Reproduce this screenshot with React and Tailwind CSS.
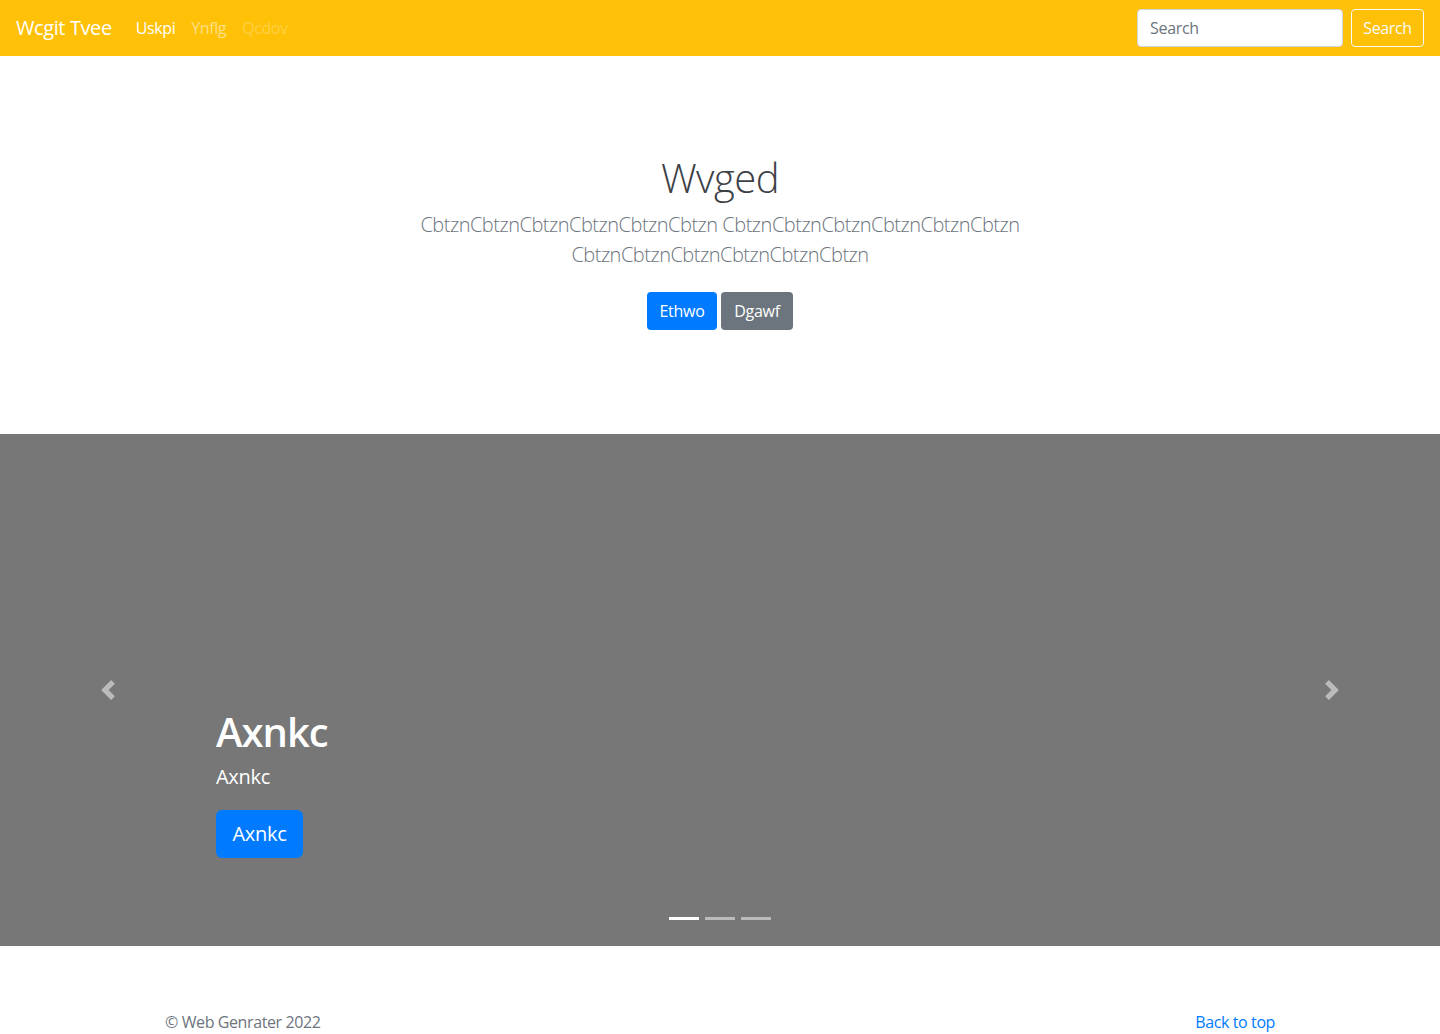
import React from "react";

const font = { fontFamily: '"Open Sans", "Noto Sans", Arial, sans-serif' };

function Chevron({ dir }) {
  return (
    <svg width="20" height="20" viewBox="0 0 8 8" fill="#fff" className="opacity-50">
      {dir === "left" ? (
        <path d="M5.25 0l-4 4 4 4 1.5-1.5L4.25 4l2.5-2.5L5.25 0z" />
      ) : (
        <path d="M2.75 0l-1.5 1.5L3.75 4l-2.5 2.5L2.75 8l4-4-4-4z" />
      )}
    </svg>
  );
}

export default function App() {
  return (
    <div className="bg-white text-[#212529] text-base leading-normal" style={font}>
      {/* Navbar */}
      <nav className="h-14 bg-[#ffc107] flex items-center justify-between px-4">
        <div className="flex items-center">
          <span className="text-white text-[20px] leading-[30px] mr-4 tracking-[-0.4px]">Wcgit Tvee</span>
          <ul className="flex items-center text-[16px] tracking-[-0.4px]">
            <li className="px-2 text-white">Uskpi</li>
            <li className="px-2 text-white/50">Ynflg</li>
            <li className="px-2 text-white/25">Qcdov</li>
          </ul>
        </div>
        <div className="flex items-center gap-2">
          <input
            type="text"
            placeholder="Search"
            className="w-[206px] h-[38px] rounded bg-white border border-[#ced4da] px-3 text-[16px] tracking-[-0.3px] placeholder:text-[#6c757d] outline-none"
          />
          <button className="h-[38px] w-[73px] rounded border border-[#f8f9fa] text-[#f8f9fa] text-[16px] tracking-[-0.4px]">
            Search
          </button>
        </div>
      </nav>

      {/* Jumbotron */}
      <section className="pt-[98px] pb-[104px] text-center">
        <div className="max-w-[730px] mx-auto px-[15px]">
          <h1 className="text-[40px] leading-[48px] font-light text-[#3d4146] mb-2 tracking-[-0.5px]">Wvged</h1>
          <p className="text-[20px] leading-[30px] font-light text-[#6c757d] tracking-[-0.5px]">
            CbtznCbtznCbtznCbtznCbtznCbtzn CbtznCbtznCbtznCbtznCbtznCbtzn CbtznCbtznCbtznCbtznCbtznCbtzn
          </p>
          <div className="mt-[22px] flex justify-center gap-1">
            <button className="h-[38px] w-[70px] rounded bg-[#007bff] text-white text-[16px] tracking-[-0.3px]">Ethwo</button>
            <button className="h-[38px] w-[72px] rounded bg-[#6c757d] text-white text-[16px] tracking-[-0.3px]">Dgawf</button>
          </div>
        </div>
      </section>

      {/* Carousel */}
      <div className="relative h-[512px] bg-[#777777]">
        <div className="absolute left-0 top-0 bottom-0 w-[15%] flex items-center justify-center">
          <Chevron dir="left" />
        </div>
        <div className="absolute right-0 top-0 bottom-0 w-[15%] flex items-center justify-center">
          <Chevron dir="right" />
        </div>
        <div className="absolute left-[15%] top-[274px] text-white">
          <h2 className="text-[40px] leading-[48px] font-semibold tracking-[-1px]">Axnkc</h2>
          <p className="mt-[6px] text-[20px] leading-[30px] tracking-[-0.3px]">Axnkc</p>
          <button className="mt-[18px] h-[48px] w-[87px] rounded-md bg-[#007bff] text-white text-[20px] tracking-[-0.3px]">
            Axnkc
          </button>
        </div>
        <div className="absolute bottom-[26px] left-0 right-0 flex justify-center gap-[6px]">
          <span className="w-[30px] h-[3px] bg-white" />
          <span className="w-[30px] h-[3px] bg-white/50" />
          <span className="w-[30px] h-[3px] bg-white/50" />
        </div>
      </div>

      {/* Footer */}
      <footer className="max-w-[1140px] mx-auto px-[15px] pt-16 flex justify-between text-[16px] leading-6 tracking-[-0.4px]">
        <p className="text-[#6c757d]">© Web Genrater 2022</p>
        <a href="#" className="text-[#007bff]">Back to top</a>
      </footer>
    </div>
  );
}
